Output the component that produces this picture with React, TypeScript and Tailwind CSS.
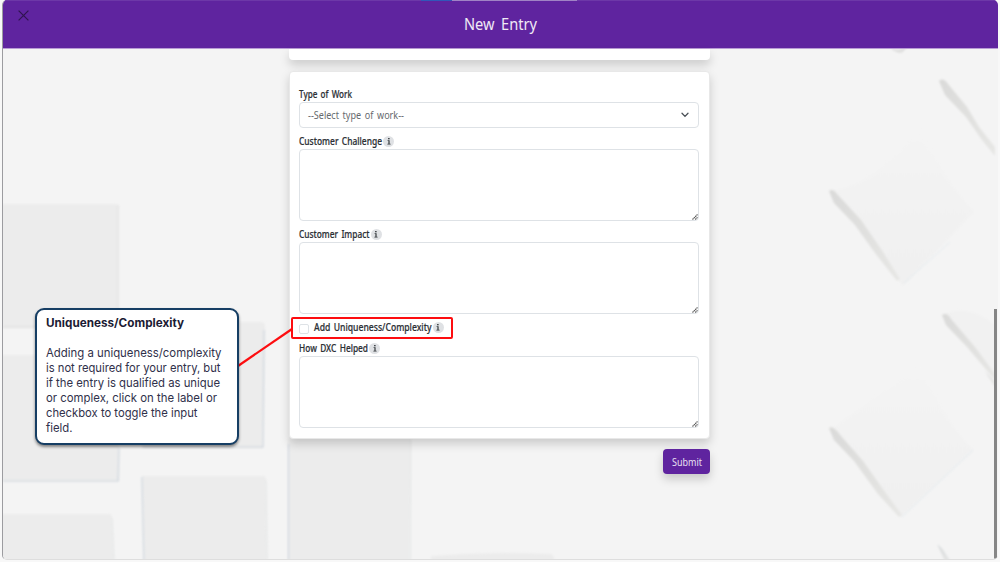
import React from "react";

const labelText =
  "font-['Noto_Sans','Liberation_Sans',sans-serif] text-[10.5px] font-medium leading-none [word-spacing:1.5px] whitespace-nowrap";

function Info() {
  return (
    <span className="ml-[1px] flex size-[11px] shrink-0 items-center justify-center rounded-full bg-[#dfe1e4]">
      <svg width="4" height="7" viewBox="0 0 4 7" fill="#33373b">
        <rect x="1.1" y="0" width="1.5" height="1.3" />
        <path d="M0.6 2.3h2v3.4h1v0.8H0.4v-0.8h1V3.1H0.6z" />
      </svg>
    </span>
  );
}

function Label({ text, width, info = true }: { text: string; width: number; info?: boolean }) {
  return (
    <div className="flex h-4 shrink-0 items-center">
      <svg className="block overflow-visible" width={width} height="16">
        <text x="0" y="11.5" textLength={width} lengthAdjust="spacingAndGlyphs" fill="#2c3035" stroke="#2c3035" strokeWidth="0.2" className={labelText}>
          {text}
        </text>
      </svg>
      {info && <Info />}
    </div>
  );
}

function Area() {
  return (
    <div className="flex h-[72px] shrink-0 items-end justify-end rounded-[4px] border border-[#dee2e6] bg-white">
      <svg width="6" height="6" viewBox="0 0 6 6" stroke="#555" strokeWidth="1.1">
        <path d="M0.5 5.5L5.5 0.5M3.3 5.5L5.5 3.3" strokeDasharray="1.5 .4" />
      </svg>
    </div>
  );
}

function Backdrop() {
  return (
    <svg className="absolute inset-0" width="994" height="511" viewBox="3 49 994 511">
      <defs>
        <linearGradient id="fade" x1="0" y1="0" x2="0" y2="1">
          <stop offset="0" stopColor="#f4f4f4" />
          <stop offset="1" stopColor="#f0f0f0" />
        </linearGradient>
        <linearGradient id="edge" x1="0" y1="0" x2="1" y2="1">
          <stop offset="0" stopColor="#dadad9" />
          <stop offset="1" stopColor="#e7e7e5" />
        </linearGradient>
        <filter id="soft" x="-10%" y="-10%" width="120%" height="120%">
          <feGaussianBlur stdDeviation="0.8" />
        </filter>
      </defs>
      <g filter="url(#soft)" fill="#ececec">
        <path d="M0 204L115 204Q118 204 118 208L118 328H0z" />
        <path d="M0 355H118L119 481H0z" />
        <path d="M140 322H261Q265 322 265 326L263 448H142z" />
        <path d="M0 514H109Q112 514 112 518L114 562H0z" />
        <path d="M142 476H263Q266 476 266 480L267 562H144z" />
        <path d="M288 438H411L410 562H288z" />
        <path d="M431 556Q490 551 551 554L554 557V562H431z" />
      </g>
      <g fill="none" strokeWidth="1.1" filter="url(#soft)">
        <path d="M3 327H118V205" stroke="#dedede" />
        <path d="M3 481H118L119 448M143 447H263L264 330M142 477L144 562M288.5 444V560" stroke="#ccd4dc" />
        <path d="M410.5 440V560M266 480L267 560M112 518L114 560" stroke="#e5e7e7" />
      </g>
      <path d="M832 191Q880 182 918 128Q945 180 974 212L903 286z" fill="url(#fade)" filter="url(#soft)" />
      <path d="M832 428L920 366Q950 430 974 450L901 517z" fill="url(#fade)" filter="url(#soft)" />
      <path d="M944 314Q970 304 995 325V379z" fill="#f1f1f1" filter="url(#soft)" />
      <g fill="url(#edge)" filter="url(#soft)">
        <path d="M939 81Q943 77 948 84L967 107L979 127L995 147V156L982 140L966 117L945 95z" />
        <path d="M829 191Q833 188 837 194L861 220L881 249L900 279L897 281L875 253L855 225L834 203z" />
        <path d="M829 428Q833 425 841 436L863 461L885 492L902 515L899 517L878 494L854 461L834 440z" />
        <path d="M942 315Q947 312 951 319L975 347L995 374V380L967 347L946 325z" />
        <path d="M892 49Q898 52 906 48L902 52H898z" stroke="#d8d8d8" />
        <path d="M938 545L942 549L949 560H945z" stroke="#dcdfe1" />
        <path d="M985 371L995 382V387z" />
      </g>
      <path d="M902 517L973 450M904 283L950 242" fill="none" stroke="#e3eaee" strokeWidth="1" filter="url(#soft)" />
    </svg>
  );
}

const callout = [
  { text: "Adding a uniqueness/complexity", width: 175.5 },
  { text: "is not required for your entry, but", width: 174.5 },
  { text: "if the entry is qualified as unique", width: 174 },
  { text: "or complex, click on the label or", width: 171 },
  { text: "checkbox to toggle the input", width: 151.5 },
  { text: "field.", width: 26.5 },
];

export default function App() {
  return (
    <div className="relative h-[562px] w-[1000px] overflow-hidden bg-[#f8f8f8]">
      <div className="ml-[2px] flex h-[560px] w-[996px] flex-col overflow-hidden rounded-[5px] border-b border-l border-b-[#dedede] border-l-[#9c9ca0] bg-[#f4f4f4]">
        <header className="relative flex h-12 shrink-0 items-center justify-center bg-[#5f249f]">
          <div className="absolute left-0 top-0 flex h-px w-full bg-[#6d38a8]">
            <span className="ml-[418px] h-px w-[31px] bg-[#3157b9]" />
            <span className="h-px w-[125px] bg-[#a083c5]" />
          </div>
          <svg className="absolute left-[15px] top-[10px]" width="11" height="11" viewBox="0 0 11 11">
            <path d="M0.6 0.6L10.4 10.4M10.4 0.6L0.6 10.4" stroke="#301450" strokeWidth="1.2" />
          </svg>
          <svg className="mr-px block overflow-visible" width="73" height="24">
            <text x="0" y="18" textLength="73" lengthAdjust="spacingAndGlyphs" fill="#efe9f5" className="font-['Noto_Sans',sans-serif] text-[16.5px] [word-spacing:3px]">
              New Entry
            </text>
          </svg>
        </header>
        <main className="relative flex flex-1 border-t border-[#b99cd5]">
          <Backdrop />
          <div className="relative ml-[286px] flex w-[421px] flex-col">
            <section className="h-[11px] shrink-0 rounded-b-[4px] bg-white shadow-[0_5px_10px_rgba(0,0,0,0.17)]" />
            <section className="mt-[11px] flex h-[368px] shrink-0 flex-col rounded-[4px] border border-[#e8e8e8] bg-white pl-[9px] pr-[10px] pt-[14px] shadow-[0_5px_10px_rgba(0,0,0,0.17)]">
              <Label text="Type of Work" width={53} info={false} />
              <div className="flex h-[26px] shrink-0 items-center justify-between rounded-[4px] border border-[#dee2e6] bg-white pl-[8px] pr-[9px]">
                <svg className="block overflow-visible" width="96" height="16">
                  <text x="0" y="11.5" textLength="96" lengthAdjust="spacingAndGlyphs" fill="#65696d" className="font-['Noto_Sans',sans-serif] text-[10.5px] [word-spacing:1.5px]">
                    --Select type of work--
                  </text>
                </svg>
                <svg width="8" height="6" viewBox="0 0 8 6" fill="none" stroke="#4b5157" strokeWidth="1.3" strokeLinecap="round">
                  <path d="M1 1.2L4 4.4L7 1.2" />
                </svg>
              </div>
              <div className="h-[5px] shrink-0" />
              <Label text="Customer Challenge" width={83} />
              <Area />
              <div className="h-[5px] shrink-0" />
              <Label text="Customer Impact" width={70.5} />
              <Area />
              <div className="mt-[5px] flex h-4 shrink-0 items-center">
                <span className="mr-[5px] mt-[3px] size-[10px] rounded-[2px] border border-[#dee2e6] bg-white" />
                <Label text="Add Uniqueness/Complexity" width={117.5} />
              </div>
              <div className="h-[5px] shrink-0" />
              <Label text="How DXC Helped" width={69} />
              <Area />
            </section>
            <button className="mt-[10px] flex h-[25px] w-[47px] items-center justify-center self-end rounded-[4px] bg-[#5f249f] shadow-[0_5px_10px_rgba(0,0,0,0.18)]">
              <svg className="block overflow-visible" width="30" height="16">
                <text x="0" y="11.5" textLength="30" lengthAdjust="spacingAndGlyphs" fill="#e9e0f2" className="font-['Noto_Sans',sans-serif] text-[10.5px]">
                  Submit
                </text>
              </svg>
            </button>
          </div>
          <div className="absolute right-[1px] top-[260px] h-[250px] w-[3px] rounded-b-[2px] bg-[#858585]" />
        </main>
      </div>

      <svg className="absolute left-0 top-0" width="1000" height="562">
        <path d="M238 366L292 329" stroke="#fd0d10" strokeWidth="2.2" />
      </svg>
      <div className="absolute left-[291px] top-[317px] h-[22px] w-[162px] rounded-[2px] border-2 border-[#fd0d10]" />
      <aside className="absolute left-[35px] top-[308px] flex h-[137px] w-[204px] flex-col rounded-[9px] border-2 border-[#163e64] bg-white pl-[9px] pt-[5px] shadow-[0_2px_3px_rgba(0,0,0,0.45)]">
        <svg className="mb-[15px] block h-[15px] shrink-0 overflow-visible" width="138">
          <text x="0" y="12" textLength="138" lengthAdjust="spacingAndGlyphs" fill="#1b1b33" className="font-['Inter',sans-serif] text-[11.5px] font-bold">
            Uniqueness/Complexity
          </text>
        </svg>
        {callout.map((line) => (
          <svg key={line.text} className="block h-[15px] shrink-0 overflow-visible" width={line.width}>
            <text x="0" y="12" textLength={line.width} lengthAdjust="spacingAndGlyphs" fill="#30304a" className="font-['Inter',sans-serif] text-[12px]">
              {line.text}
            </text>
          </svg>
        ))}
      </aside>
    </div>
  );
}
